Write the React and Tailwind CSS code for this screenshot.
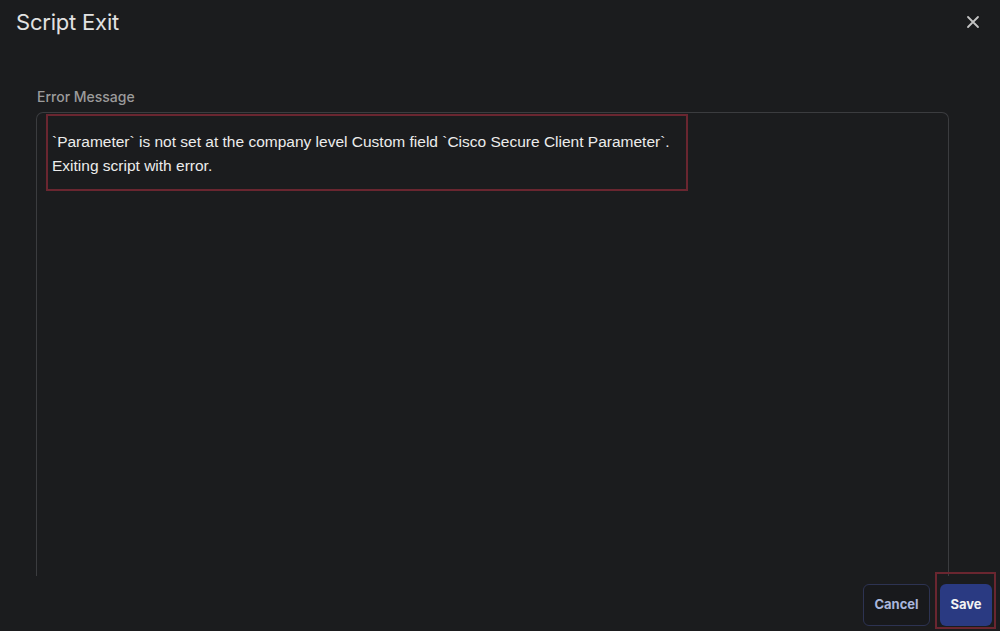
export default function App() {
    return (
        <div className="relative flex h-[631px] w-full flex-col overflow-hidden bg-[#1b1c1e] font-['Inter',sans-serif]">
            {/* Header */}
            <div className="flex h-[44px] shrink-0 items-center justify-between pl-4 pr-[20px]">
                <h1 className="text-[22px] font-normal leading-none tracking-[-0.2px] text-[#e2e2e2]">Script Exit</h1>
                <button type="button" className="text-[#c4c4c4]" aria-label="Close">
                    <svg width="14" height="14" viewBox="0 0 14 14" fill="none" stroke="currentColor" strokeWidth="1.8" strokeLinecap="round">
                        <path d="M2 2l10 10M12 2L2 12" />
                    </svg>
                </button>
            </div>

            {/* Body */}
            <div className="flex min-h-0 flex-1 flex-col overflow-hidden pl-[36px] pr-[51px] pt-[44px]">
                <label className="mb-[6px] ml-px text-[14px] font-medium leading-[18px] text-[#9b9b9b]">Error Message</label>
                <div className="relative flex-1 rounded-t-[7px] border-x border-t border-[#3b3c3f] bg-[#1b1c1e] px-[15px] pt-[17px]">
                    <p className="font-['Liberation_Sans',Arial,sans-serif] text-[15.5px] leading-[24px] text-[#ececec]">
                        `Parameter` is not set at the company level Custom field `Cisco Secure Client Parameter`.
                        <br />
                        Exiting script with error.
                    </p>
                    {/* highlight annotation */}
                    <div className="pointer-events-none absolute left-[9px] top-px h-[77px] w-[642px] border-2 border-[#6a2630]" />
                </div>
            </div>

            {/* Footer */}
            <div className="flex h-[55px] shrink-0 items-start justify-end gap-[10px] pr-[8px] pt-[8px]">
                <button type="button" className="h-[42px] w-[67px] rounded-[6px] border border-[#2d3352] bg-[#18191c] text-[13px] font-bold text-[#a9b6dc]">
                    Cancel
                </button>
                <button type="button" className="h-[42px] w-[52px] rounded-[6px] bg-[#2a3a82] text-[13px] font-bold text-[#f2f2f2]">
                    Save
                </button>
            </div>

            {/* Save highlight annotation */}
            <div className="pointer-events-none absolute left-[935px] top-[572px] h-[57px] w-[61px] border-2 border-[#6a2630]" />
        </div>
    );
}
